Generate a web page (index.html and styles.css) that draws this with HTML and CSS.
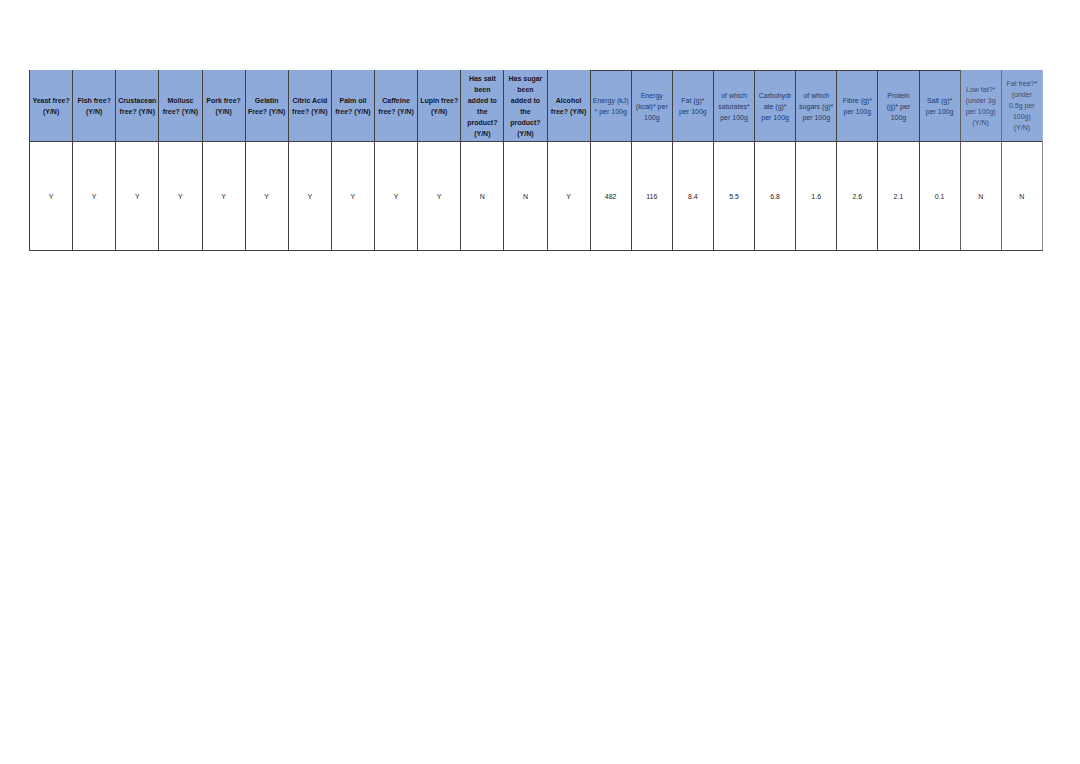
FILE: index.html
```html
<!DOCTYPE html>
<html lang="en">
<head>
<meta charset="utf-8">
<title>Product nutrition sheet</title>
<link rel="stylesheet" href="styles.css">
</head>
<body>
<main class="page">
<table class="sheet">
  <colgroup>
    <col class="c-wide"><col class="c-wide"><col class="c-wide"><col class="c-wide"><col class="c-wide">
    <col class="c-wide"><col class="c-wide"><col class="c-wide"><col class="c-wide"><col class="c-wide">
    <col class="c-wide"><col class="c-wide"><col class="c-wide">
    <col class="c-nar"><col class="c-nar"><col class="c-nar"><col class="c-nar"><col class="c-nar">
    <col class="c-nar"><col class="c-nar"><col class="c-nar"><col class="c-nar"><col class="c-nar"><col class="c-nar">
  </colgroup>
  <thead>
    <tr class="head">
      <th class="bold">Yeast free?<br>(Y/N)</th>
      <th class="bold">Fish free?<br>(Y/N)</th>
      <th class="bold">Crustacean<br>free? (Y/N)</th>
      <th class="bold">Mollusc<br>free? (Y/N)</th>
      <th class="bold">Pork free?<br>(Y/N)</th>
      <th class="bold">Gelatin<br>Free? (Y/N)</th>
      <th class="bold">Citric Acid<br>free? (Y/N)</th>
      <th class="bold">Palm oil<br>free? (Y/N)</th>
      <th class="bold">Caffeine<br>free? (Y/N)</th>
      <th class="bold">Lupin free?<br>(Y/N)</th>
      <th class="bold">Has salt<br>been<br>added to<br>the<br>product?<br>(Y/N)</th>
      <th class="bold">Has sugar<br>been<br>added to<br>the<br>product?<br>(Y/N)</th>
      <th class="bold">Alcohol<br>free? (Y/N)</th>
      <th class="nut">Energy (kJ)<br>* per 100g</th>
      <th class="nut">Energy<br>(kcal)* per<br>100g</th>
      <th class="nut">Fat (g)*<br>per 100g</th>
      <th class="nut">of which<br>saturates*<br>per 100g</th>
      <th class="nut">Carbohydr<br>ate (g)*<br>per 100g</th>
      <th class="nut">of which<br>sugars (g)*<br>per 100g</th>
      <th class="nut">Fibre (g)*<br>per 100g</th>
      <th class="nut">Protein<br>(g)* per<br>100g</th>
      <th class="nut salt">Salt (g)*<br>per 100g</th>
      <th class="soft">Low fat?*<br>(under 3g<br>per 100g)<br>(Y/N)</th>
      <th class="soft last">Fat free?*<br>(under<br>0.5g per<br>100g)<br>(Y/N)</th>
    </tr>
  </thead>
  <tbody>
    <tr class="data">
      <td>Y</td><td>Y</td><td>Y</td><td>Y</td><td>Y</td><td>Y</td><td>Y</td>
      <td>Y</td><td>Y</td><td>Y</td><td>N</td><td>N</td><td>Y</td>
      <td>482</td><td>116</td><td>8.4</td><td>5.5</td><td>6.8</td><td>1.6</td>
      <td>2.6</td><td>2.1</td><td class="salt">0.1</td>
      <td class="soft">N</td><td class="soft last">N</td>
    </tr>
  </tbody>
</table>
</main>
</body>
</html>
```
FILE: styles.css
```css
html, body {
  margin: 0;
  padding: 0;
  background: #ffffff;
}

.page {
  padding: 70px 0 0 29px;
}

.sheet {
  border-collapse: separate;
  border-spacing: 0;
  table-layout: fixed;
  width: 1014px;
  border-left: 1px solid #404040;
  font-family: "Liberation Sans", Arial, sans-serif;
  font-size: 7px;
  line-height: 11px;
}

.c-wide { width: 43.1px; }
.c-nar { width: 41.1px; }

.sheet th,
.sheet td {
  padding: 0 1px;
  text-align: center;
  vertical-align: middle;
  white-space: nowrap;
  overflow: hidden;
  border-right: 1px solid #404040;
  border-bottom: 1px solid #404040;
}

.head { height: 72px; }
.data { height: 109px; }

.sheet th {
  background: #8eaadb;
  font-weight: normal;
}

.sheet th.bold {
  font-weight: bold;
  color: #16161c;
}

.sheet th.nut {
  color: #203a68;
  border-top: 1px solid #404040;
}

.sheet th.soft {
  color: #3c4b6c;
}

.sheet .salt {
  border-right-color: #5e5e5e;
}

.sheet .soft {
  border-right-color: #6e6e6e;
}

.sheet th.last {
  border-right-color: #a9b8d6;
}

.sheet td.last {
  border-right-color: #8a8a8a;
}

.sheet td {
  color: #1e1e1e;
  background: #ffffff;
}
```
